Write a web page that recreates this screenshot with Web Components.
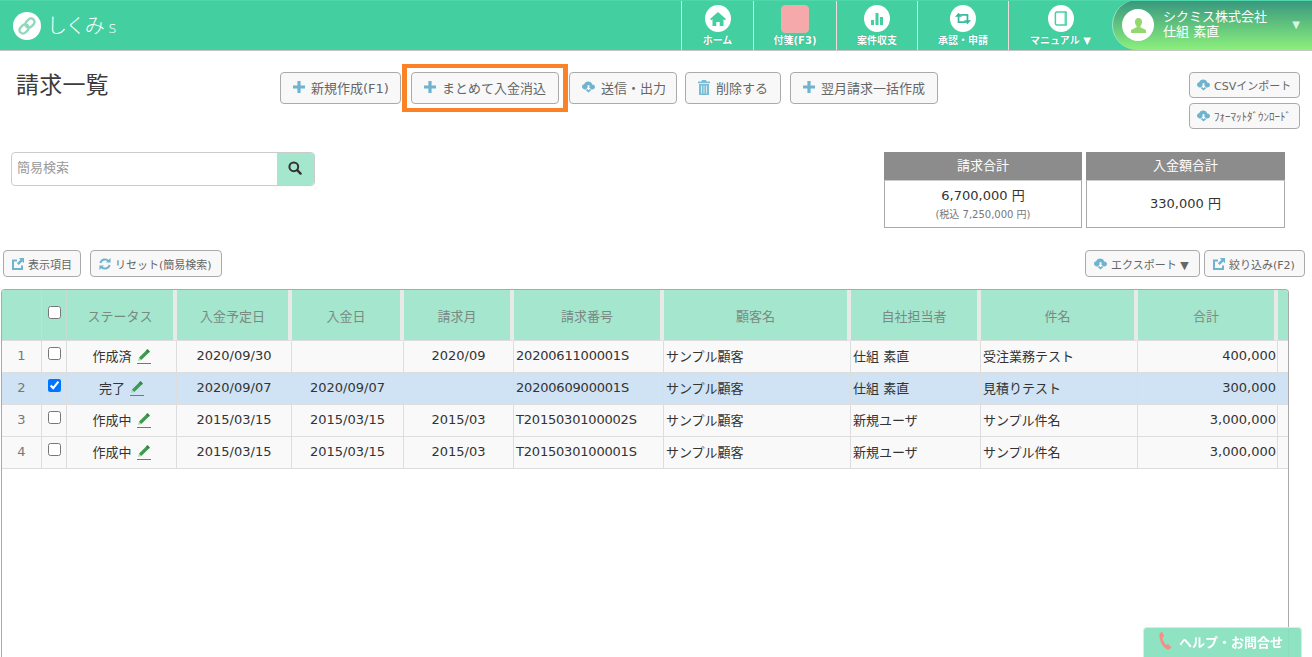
<!DOCTYPE html>
<html lang="ja">
<head>
<meta charset="utf-8">
<title>請求一覧</title>
<style>
  html, body { margin: 0; height: 100%; overflow: hidden; background: #fff; }
  body { font-family: "DejaVu Sans", "Noto Sans CJK JP", sans-serif; font-size: 13px; color: #333; }
</style>
</head>
<body>
<seikyu-page></seikyu-page>

<script>
const ICONS = {
  plus: '<svg viewBox="0 0 12 12" width="12" height="12"><path fill="#6fb3cf" d="M4.400 0h3.200v4.400H12v3.200H7.600V12H4.400V7.600H0V4.400h4.400z"/></svg>',
  cloud: '<svg viewBox="0 0 14 12" width="13" height="12"><path fill="#6fb3cf" d="M3.200 8.600C1.400 8.600 0 7.400 0 5.800c0-1.400 1-2.500 2.300-2.700C2.800 1.300 4.600 0 6.600 0c2.200 0 4 1.400 4.400 3.300 1.800 0 3 1.200 3 2.800 0 1.400-1.300 2.500-3 2.500z"/><path fill="#6fb3cf" d="M5.500 7h3v2.200H10L7 12 4 9.200h1.500z"/><path fill="#fff" d="M6 4h2v3h1.400L7 9.400 4.600 7H6z"/></svg>',
  trash: '<svg viewBox="0 0 12 15" width="12" height="15"><path fill="#7cbdd6" d="M4 0h4l.6 1.600H12v1.600H0V1.600h3.400zM1 4h10v11H1z"/><path stroke="#d8ebf2" stroke-width="1" d="M3.500 5.500v8M6 5.500v8M8.500 5.500v8"/></svg>',
  share: '<svg viewBox="0 0 12 12" width="12" height="12"><path fill="none" stroke="#6fb3cf" stroke-width="2" d="M10 7.500V11H1V2.500h4"/><path fill="#6fb3cf" d="M6.800 0H12v5.200l-1.700-1.700-3.600 3.600-1.800-1.800 3.600-3.600z"/></svg>',
  refresh: '<svg viewBox="0 0 12 12" width="12" height="12"><path fill="none" stroke="#6fb3cf" stroke-width="2" d="M1.400 5A4.800 4.800 0 0 1 9.600 3M10.600 7A4.800 4.800 0 0 1 2.400 9"/><path fill="#6fb3cf" d="M11.600 0v4.600H7zM.4 12V7.400H5z"/></svg>',
  search: '<svg viewBox="0 0 14 14" width="14" height="14"><circle cx="5.800" cy="5.800" r="4.400" fill="none" stroke="#333" stroke-width="2"/><path stroke="#333" stroke-width="2.400" stroke-linecap="round" d="M9.200 9.200L12.600 12.600"/></svg>',
  pencil: '<svg viewBox="0 0 15 15" width="15" height="15"><path fill="#3d9a4f" d="M11.600 0L14 2.400 5.300 11 2.900 8.700z"/><path fill="#a5d8a0" d="M2.900 8.700l2.400 2.300-3.300 1z"/><path fill="#2f7f44" d="M12.600 3.800l-2.400-2.400.9-.9 2.400 2.400z"/><path stroke="#3d9a4f" stroke-width="1" d="M1 14.500h14"/></svg>',
  link: '<svg viewBox="0 0 20 20" width="20" height="20"><g transform="rotate(-45 10 10)" fill="none" stroke="#8fd9bd" stroke-width="2.400"><rect x="0.800" y="6.500" width="10" height="7" rx="3.500"/><rect x="9.200" y="6.500" width="10" height="7" rx="3.500"/></g></svg>',
  home: '<svg viewBox="0 0 16 14" width="16" height="14"><path fill="#44cfa0" d="M8 0l8 7-1.200 1.300L13.500 7.200V14H9.700v-4H6.300v4H2.500V7.200L1.200 8.300 0 7z"/></svg>',
  chart: '<svg viewBox="0 0 14 14" width="14" height="14"><path fill="#44cfa0" d="M1 8h3v5H1zM5.500 1h3v12h-3zM10 5h3v8h-3z"/></svg>',
  retweet: '<svg viewBox="0 0 18 14" width="16" height="13"><g fill="none" stroke="#3bb9a0" stroke-width="2"><path d="M4 4v7h8"/><path d="M14 10V3H6"/></g><path fill="#3bb9a0" d="M0 5h8L4 0.500zM10 9h8l-4 4.500z"/></svg>',
  book: '<svg viewBox="0 0 14 16" width="13" height="15"><path fill="none" stroke="#44cfa0" stroke-width="1.600" d="M3 1h10v14H3a1.500 1.500 0 0 1-1.500-1.500v-11A1.500 1.500 0 0 1 3 1z"/><path fill="#44cfa0" d="M11 1h2v14h-2z" opacity=".5"/></svg>',
  user: '<svg viewBox="0 0 16 16" width="15" height="15"><path fill="#93d86d" d="M8 0c2.400 0 3.800 1.800 3.800 4.200 0 1.800-.8 3.400-1.800 4.300v1.300l5 2.400c.6.300 1 .9 1 1.600V16H0v-2.200c0-.7.4-1.300 1-1.600l5-2.400V8.500C5 7.600 4.200 6 4.200 4.200 4.200 1.800 5.600 0 8 0z"/></svg>',
  phone: '<svg viewBox="0 0 14 18" width="15" height="18"><path fill="#f58e84" d="M1 1.200L3.800 0l1.900 4.200-1.800 1.300c.4 2.800 1.700 5.400 3.700 7.500l2-.9L13 15.500l-2.300 2.100C5 18 .2 8.400 1 1.200z"/></svg>'
};

class ToolButton extends HTMLElement {
  constructor() {
    super();
    this.attachShadow({ mode: 'open' });
  }
  connectedCallback() {
    const icon = ICONS[this.getAttribute('icon')] || '';
    this.shadowRoot.innerHTML = `
    <style>
      :host {
        display: inline-flex;
        align-items: center;
        box-sizing: border-box;
        height: var(--btn-h, 32px);
        padding: 0 0 var(--btn-pb, 2px) var(--btn-pad, 12px);
        gap: var(--btn-gap, 6px);
        border: 1px solid #aaa;
        border-radius: 4px;
        background: #f8f8f8;
        color: #666;
        font-size: var(--btn-size, 13px);
        white-space: nowrap;
        position: relative;
      }
      svg { display: block; flex: none; }
      :host([marked])::after {
        content: "";
        position: absolute;
        left: -10px;
        right: -10px;
        top: -9px;
        bottom: -9px;
        border: 4px solid #fb8227;
        border-left-width: 5px;
        border-right-width: 5px;
        pointer-events: none;
      }
    </style>
    ${icon}<slot></slot>`;
  }
}

class NavItem extends HTMLElement {
  constructor() {
    super();
    this.attachShadow({ mode: 'open' });
  }
  connectedCallback() {
    const pink = this.hasAttribute('pink');
    const icon = ICONS[this.getAttribute('icon')] || '';
    this.shadowRoot.innerHTML = `
    <style>
      :host {
        display: flex;
        flex-direction: column;
        align-items: center;
        box-sizing: border-box;
        height: 50px;
        padding-top: 5px;
        border-left: 1px solid #f0dcdc;
        color: #fff;
        font-size: 10px;
        font-weight: bold;
        white-space: nowrap;
        text-shadow: 0 0 1px #2a9c78;
      }
      .badge {
        display: flex;
        align-items: center;
        justify-content: center;
        width: 26px;
        height: 27px;
        border-radius: 50%;
        background: #fff;
      }
      .badge.pink {
        width: 28px;
        height: 28px;
        border-radius: 4px;
        background: #f6a9ab;
        border: 1px solid #e9b0b0;
        box-sizing: border-box;
        margin-bottom: -1px;
      }
      .label { margin-top: 2px; line-height: 14px; }
    </style>
    <div class="badge ${pink ? 'pink' : ''}">${icon}</div>
    <div class="label"><slot></slot></div>`;
  }
}

class AppHeader extends HTMLElement {
  constructor() {
    super();
    this.attachShadow({ mode: 'open' });
  }
  connectedCallback() {
    this.shadowRoot.innerHTML = `
    <style>
      :host {
        display: flex;
        height: 51px;
        box-sizing: border-box;
        background: #44cfa0;
        border-top: 1px solid #4fd6a9;
        border-bottom: 1px solid #c6c6c6;
        color: #fff;
        overflow: hidden;
      }
      .logo { flex: 1; display: flex; align-items: center; padding-left: 13px; gap: 6px; }
      .mark {
        width: 28px;
        height: 28px;
        border-radius: 50%;
        background: #fff;
        display: flex;
        align-items: center;
        justify-content: center;
      }
      .name { font-size: 20px; letter-spacing: -1.500px; font-weight: 300; padding-bottom: 3px; }
      .name small { font-size: 16px; margin-left: 5px; }
      nav { display: flex; height: 50px; margin-top: -1px; }
      nav-item:nth-child(1) { width: 72px; }
      nav-item:nth-child(2) { width: 83px; }
      nav-item:nth-child(3) { width: 81px; }
      nav-item:nth-child(4) { width: 91px; }
      nav-item:nth-child(5) { width: 104px; }
      .user {
        width: 200px;
        box-sizing: border-box;
        height: 50px;
        margin-top: -1px;
        display: flex;
        align-items: center;
        padding-left: 9px;
        gap: 9px;
        border-radius: 40px 0 0 40px;
        border-left: 1px solid #9fe3c8;
        background: linear-gradient(#37967f, #8cf07c);
        font-size: 13px;
        line-height: 15px;
      }
      .avatar {
        width: 32px;
        height: 32px;
        border-radius: 50%;
        background: #fff;
        display: flex;
        align-items: center;
        justify-content: center;
      }
      .who { flex: 1; white-space: nowrap; padding-bottom: 3px; }
      .arrow { font-size: 10px; margin-right: 12px; padding-bottom: 1px; color: #d9f5e4; }
    </style>
    <div class="logo">
      <div class="mark">${ICONS.link}</div>
      <div class="name">しくみ<small>s</small></div>
    </div>
    <nav>
      <nav-item icon="home">ホーム</nav-item>
      <nav-item pink>付箋(F3)</nav-item>
      <nav-item icon="chart">案件収支</nav-item>
      <nav-item icon="retweet">承認・申請</nav-item>
      <nav-item icon="book">マニュアル ▼</nav-item>
    </nav>
    <div class="user">
      <div class="avatar">${ICONS.user}</div>
      <div class="who">シクミス株式会社<br>仕組 素直</div>
      <div class="arrow">▼</div>
    </div>`;
  }
}

class SearchBox extends HTMLElement {
  constructor() {
    super();
    this.attachShadow({ mode: 'open' });
  }
  connectedCallback() {
    this.shadowRoot.innerHTML = `
    <style>
      :host {
        display: flex;
        box-sizing: border-box;
        width: 304px;
        height: 34px;
        border: 1px solid #ccc;
        border-radius: 4px;
        overflow: hidden;
      }
      .field { flex: 1; padding-left: 5px; line-height: 30px; color: #999; font-size: 13px; }
      .go {
        width: 37px;
        background: #a5e6cf;
        display: flex;
        align-items: center;
        justify-content: center;
        padding-bottom: 2px;
        padding-right: 2px;
        box-sizing: border-box;
      }
    </style>
    <div class="field">簡易検索</div>
    <div class="go">${ICONS.search}</div>`;
  }
}

class SummaryBox extends HTMLElement {
  constructor() {
    super();
    this.attachShadow({ mode: 'open' });
  }
  connectedCallback() {
    this.shadowRoot.innerHTML = `
    <style>
      :host { display: block; box-sizing: border-box; width: var(--w, 198px); height: 76px; }
      .head {
        height: 28px;
        line-height: 28px;
        background: #8c8c8c;
        color: #fff;
        text-align: center;
        font-size: 13px;
      }
      .body {
        box-sizing: border-box;
        height: 48px;
        border: 1px solid #aaa;
        border-top: 1px solid #ccc;
        display: flex;
        flex-direction: column;
        justify-content: center;
        align-items: center;
        font-size: 13px;
        line-height: 18px;
        color: #333;
      }
    </style>
    <div class="head">${this.getAttribute('label')}</div>
    <div class="body"><slot></slot></div>`;
  }
}

const GRID_COLS = [
  { label: '', w: 40, align: 'center' },
  { label: '', w: 25, align: 'center' },
  { label: 'ステータス', w: 110, align: 'center', gap: 1 },
  { label: '入金予定日', w: 115, align: 'center', gap: 1 },
  { label: '入金日', w: 112, align: 'center', gap: 1 },
  { label: '請求月', w: 110, align: 'center', gap: 1 },
  { label: '請求番号', w: 150, align: 'left tight', gap: 1 },
  { label: '顧客名', w: 187, align: 'left', gap: 1 },
  { label: '自社担当者', w: 130, align: 'left', gap: 1 },
  { label: '件名', w: 157, align: 'left', gap: 1 },
  { label: '合計', w: 140, align: 'right', gap: 1 },
  { label: '', w: 10, align: 'left' }
];

const GRID_ROWS = [
  ['作成済', '2020/09/30', '', '2020/09', '2020061100001S', 'サンプル顧客', '仕組 素直', '受注業務テスト', '400,000'],
  ['完了', '2020/09/07', '2020/09/07', '', '2020060900001S', 'サンプル顧客', '仕組 素直', '見積りテスト', '300,000'],
  ['作成中', '2015/03/15', '2015/03/15', '2015/03', 'T2015030100002S', 'サンプル顧客', '新規ユーザ', 'サンプル件名', '3,000,000'],
  ['作成中', '2015/03/15', '2015/03/15', '2015/03', 'T2015030100001S', 'サンプル顧客', '新規ユーザ', 'サンプル件名', '3,000,000']
];

class DataGrid extends HTMLElement {
  constructor() {
    super();
    this.attachShadow({ mode: 'open' });
  }
  renderRow(row, i) {
    const checked = i === 1;
    const cells = row.map((text, c) => {
      const col = GRID_COLS[c + 2];
      if (c === 0) {
        return `<td class="center">${text} <span class="edit">${ICONS.pencil}</span></td>`;
      }
      return `<td class="${col.align}">${text}</td>`;
    }).join('');
    return `<tr class="${checked ? 'sel' : ''}">
      <td class="center num">${i + 1}</td>
      <td class="center"><input type="checkbox" ${checked ? 'checked' : ''}></td>
      ${cells}<td></td></tr>`;
  }
  connectedCallback() {
    this.shadowRoot.innerHTML = `
    <style>
      :host {
        display: block;
        box-sizing: border-box;
        border: 1px solid #aaa;
        border-bottom: 0;
        border-radius: 4px 4px 0 0;
        overflow: hidden;
        background: #fff;
        font-size: 13px;
        color: #333;
      }
      table { border-collapse: separate; border-spacing: 0; table-layout: fixed; width: 1286px; }
      th {
        height: 50px;
        padding: 0;
        background: #a5e6cf;
        color: #7a8a82;
        font-weight: normal;
        text-align: center;
        border-right: 1px solid #c8dcd3;
        border-bottom: 1px solid #ddd;
      }
      th.gap { border-right: 4px solid #e9e9e9; }
      th:last-child { border-right: 0; }
      td {
        height: 28px;
        padding: 0 2px 3px;
        background: #f9f9f9;
        border-right: 1px solid #ddd;
        border-bottom: 1px solid #ddd;
        white-space: nowrap;
        overflow: hidden;
      }
      td:last-child { border-right: 0; }
      tr.sel td { background: #cfe3f5; }
      .center { text-align: center; }
      .left { text-align: left; }
      .tight { letter-spacing: -.2px; }
      .right { text-align: right; padding-right: 1px; }
      .num { color: #777; }
      input { margin: 0 0 4px; vertical-align: middle; }
      th input { margin: 0 0 6px; }
      .edit { display: inline-block; vertical-align: -3px; }
      .edit svg { display: block; }
    </style>
    <table>
      <colgroup>${GRID_COLS.map(c => `<col style="width:${c.w}px">`).join('')}</colgroup>
      <thead><tr>
        ${GRID_COLS.map((c, i) => `<th class="${c.gap ? 'gap' : ''}">${i === 1 ? '<input type="checkbox">' : c.label}</th>`).join('')}
      </tr></thead>
      <tbody>${GRID_ROWS.map((r, i) => this.renderRow(r, i)).join('')}</tbody>
    </table>`;
  }
}

class HelpTab extends HTMLElement {
  constructor() {
    super();
    this.attachShadow({ mode: 'open' });
  }
  connectedCallback() {
    this.shadowRoot.innerHTML = `
    <style>
      :host {
        position: fixed;
        right: 10px;
        bottom: 0;
        width: 159px;
        height: 30px;
        box-sizing: border-box;
        display: flex;
        align-items: center;
        padding: 0 0 3px 14px;
        gap: 6px;
        border-radius: 4px 4px 0 0;
        border: 1px solid #dfe9e4;
        border-bottom: 0;
        background: rgba(134, 225, 190, .93);
        color: #fff;
        font-size: 13px;
        font-weight: bold;
      }
      svg { display: block; }
    </style>
    ${ICONS.phone}<span>ヘルプ・お問合せ</span>`;
  }
}

class SeikyuPage extends HTMLElement {
  constructor() {
    super();
    this.attachShadow({ mode: 'open' });
  }
  connectedCallback() {
    this.shadowRoot.innerHTML = `
    <style>
      :host { display: flex; flex-direction: column; height: 657px; overflow: hidden; }
      .top { display: flex; height: 101px; box-sizing: border-box; padding: 21px 12px 0 17px; }
      h1 { margin: 0 0 0 -1px; width: 264px; font-size: 23px; letter-spacing: .2px; font-weight: normal; line-height: 26px; color: #3c3c3c; }
      .tools { display: flex; flex: 1; align-items: flex-start; }
      .side { display: flex; flex-direction: column; gap: 5px; --btn-h: 26px; --btn-size: 11px; --btn-pad: 7px; --btn-gap: 4px; --btn-pb: 1px; }
      .side tool-button { width: 111px; }
      .mid { display: flex; justify-content: space-between; height: 98px; padding: 0 27px 0 11px; }
      .sums { display: flex; gap: 4px; }
      .acts { display: flex; justify-content: space-between; height: 39px; padding: 0 7px 0 3px; --btn-h: 27px; --btn-size: 11px; --btn-pad: 8px; --btn-gap: 4px; --btn-pb: 0; }
      .acts div { display: flex; gap: 9px; }
      .acts div:last-child { gap: 4px; }
      .small { font-size: 10px; line-height: 14px; margin-top: 3px; color: #777; }
      data-grid { flex: 1; margin-left: 1px; width: 1288px; }
    </style>
    <app-header></app-header>
    <div class="top">
      <h1>請求一覧</h1>
      <div class="tools">
        <tool-button icon="plus" style="width:121px">新規作成(F1)</tool-button>
        <tool-button icon="plus" marked style="width:148px;margin-left:10px">まとめて入金消込</tool-button>
        <tool-button icon="cloud" style="width:108px;margin-left:10px">送信・出力</tool-button>
        <tool-button icon="trash" style="width:96px;margin-left:8px">削除する</tool-button>
        <tool-button icon="plus" style="width:148px;margin-left:9px">翌月請求一括作成</tool-button>
      </div>
      <div class="side">
        <tool-button icon="cloud">CSVインポート</tool-button>
        <tool-button icon="cloud">ﾌｫｰﾏｯﾄﾀﾞｳﾝﾛｰﾄﾞ</tool-button>
      </div>
    </div>
    <div class="mid">
      <search-box></search-box>
      <div class="sums">
        <summary-box label="請求合計">
          <div>6,700,000 円</div>
          <div class="small">(税込 7,250,000 円)</div>
        </summary-box>
        <summary-box label="入金額合計" style="--w:199px">330,000 円</summary-box>
      </div>
    </div>
    <div class="acts">
      <div>
        <tool-button icon="share" style="width:78px">表示項目</tool-button>
        <tool-button icon="refresh" style="width:132px">リセット(簡易検索)</tool-button>
      </div>
      <div>
        <tool-button icon="cloud" style="width:115px">エクスポート ▼</tool-button>
        <tool-button icon="share" style="width:101px">絞り込み(F2)</tool-button>
      </div>
    </div>
    <data-grid></data-grid>
    <help-tab></help-tab>`;
  }
}

customElements.define('tool-button', ToolButton);
customElements.define('nav-item', NavItem);
customElements.define('app-header', AppHeader);
customElements.define('search-box', SearchBox);
customElements.define('summary-box', SummaryBox);
customElements.define('data-grid', DataGrid);
customElements.define('help-tab', HelpTab);
customElements.define('seikyu-page', SeikyuPage);
</script>
</body>
</html>
